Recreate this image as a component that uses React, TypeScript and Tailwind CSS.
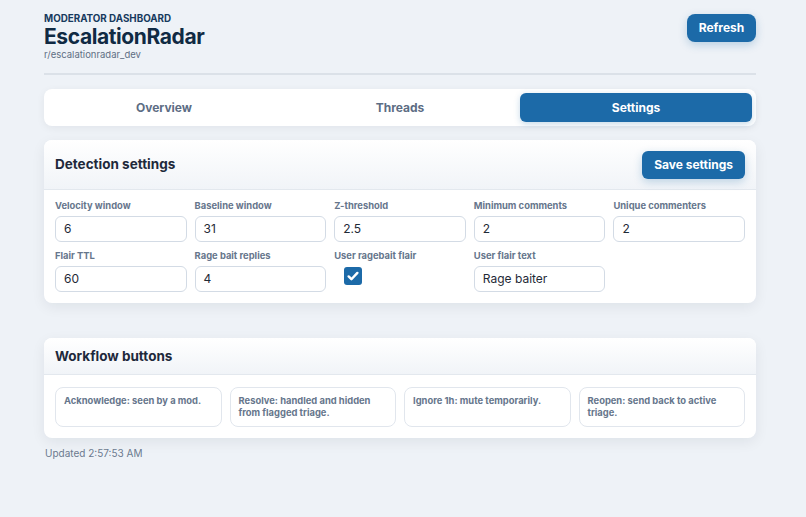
const fields = [
  { label: 'Velocity window', value: '6' },
  { label: 'Baseline window', value: '31' },
  { label: 'Z-threshold', value: '2.5' },
  { label: 'Minimum comments', value: '2' },
  { label: 'Unique commenters', value: '2' },
  { label: 'Flair TTL', value: '60' },
  { label: 'Rage bait replies', value: '4' },
]

const workflow = [
  'Acknowledge: seen by a mod.',
  'Resolve: handled and hidden from flagged triage.',
  'Ignore 1h: mute temporarily.',
  'Reopen: send back to active triage.',
]

function Field({ label, value }: { label: string; value: string }) {
  return (
    <div className="flex flex-col">
      <div className="text-[9.4px] leading-[12px] font-bold text-[#66768c]">{label}</div>
      <div className="mt-1 h-[26px] rounded-md border border-[#d3dbe5] bg-white pl-2 flex items-center text-[12px] text-[#1f2a37]">
        {value}
      </div>
    </div>
  )
}

export default function App() {
  return (
    <div
      className="min-h-[517px] w-full bg-[#eef2f7] px-[44px] pt-[13px]"
      style={{ fontFamily: 'Inter, "Noto Sans", sans-serif' }}
    >
      <div className="w-[712px]">
        <div className="flex justify-between items-start">
          <div className="flex flex-col">
            <div className="text-[9.8px] leading-[12px] font-bold text-[#173a5e]">MODERATOR DASHBOARD</div>
            <div className="text-[21px] leading-[24px] font-bold text-[#102a43] tracking-[-0.4px]">EscalationRadar</div>
            <div className="text-[9.5px] leading-[12px] text-[#5f6f84]">r/escalationradar_dev</div>
          </div>
          <button className="mt-[1px] h-[28px] w-[69px] rounded-lg bg-[#1c6aa8] text-white text-[12px] font-bold shadow-[0_3px_8px_rgba(28,106,168,0.25)]">
            Refresh
          </button>
        </div>

        <div className="mt-3 h-[2px] bg-[#dbe1e8]" />

        <div className="mt-[14px] rounded-lg bg-white p-1 grid grid-cols-3 gap-1 shadow-[0_2px_8px_rgba(15,23,42,0.06)]">
          <div className="h-[29px] flex items-center justify-center text-[12px] font-bold text-[#5d6d84]">Overview</div>
          <div className="h-[29px] flex items-center justify-center text-[12px] font-bold text-[#5d6d84]">Threads</div>
          <div className="h-[29px] flex items-center justify-center rounded-md bg-[#1c6aa8] text-[12px] font-bold text-white shadow-[0_2px_6px_rgba(28,106,168,0.25)]">
            Settings
          </div>
        </div>

        <div className="mt-[14px] rounded-lg bg-white overflow-hidden shadow-[0_4px_14px_rgba(15,23,42,0.07)]">
          <div className="h-[50px] px-[11px] flex items-center justify-between bg-gradient-to-b from-white to-[#f1f4f8] border-b border-[#e3e8ee]">
            <div className="text-[13.5px] font-bold text-[#1e293b]">Detection settings</div>
            <button className="h-[28px] px-3 rounded-md bg-[#1c6aa8] text-white text-[12px] font-bold shadow-[0_3px_8px_rgba(28,106,168,0.25)]">
              Save settings
            </button>
          </div>
          <div className="px-[11px] pt-[10px] pb-[11px] grid grid-cols-5 gap-x-2 gap-y-2">
            {fields.map((f) => (
              <Field key={f.label} label={f.label} value={f.value} />
            ))}
            <div className="flex flex-col">
              <div className="text-[9.4px] leading-[12px] font-bold text-[#66768c]">User ragebait flair</div>
              <div className="mt-[5px] ml-[10px] w-[18px] h-[18px] rounded-[3px] bg-[#1c6aa8] flex items-center justify-center">
                <svg width="14" height="14" viewBox="0 0 16 16" fill="none">
                  <path d="M3 8.5l3.2 3.2L13 4.5" stroke="white" strokeWidth="2.8" strokeLinecap="round" strokeLinejoin="round" />
                </svg>
              </div>
            </div>
            <Field label="User flair text" value="Rage baiter" />
          </div>
        </div>

        <div className="mt-[35px] rounded-lg bg-white overflow-hidden shadow-[0_4px_14px_rgba(15,23,42,0.07)]">
          <div className="h-[37px] px-[11px] flex items-center bg-gradient-to-b from-white to-[#f1f4f8] border-b border-[#e3e8ee]">
            <div className="text-[13.5px] font-bold text-[#1e293b]">Workflow buttons</div>
          </div>
          <div className="px-[11px] pt-3 pb-[11px] grid grid-cols-4 gap-2">
            {workflow.map((w) => (
              <div key={w} className="h-[40px] rounded-lg border border-[#e1e6ed] px-2 pt-[7px] text-[9.4px] leading-[12px] font-bold text-[#66768c]">
                {w}
              </div>
            ))}
          </div>
        </div>

        <div className="mt-2 pl-[1px] text-[10px] leading-[14px] text-[#6b7a8f]">Updated 2:57:53 AM</div>
      </div>
    </div>
  )
}
